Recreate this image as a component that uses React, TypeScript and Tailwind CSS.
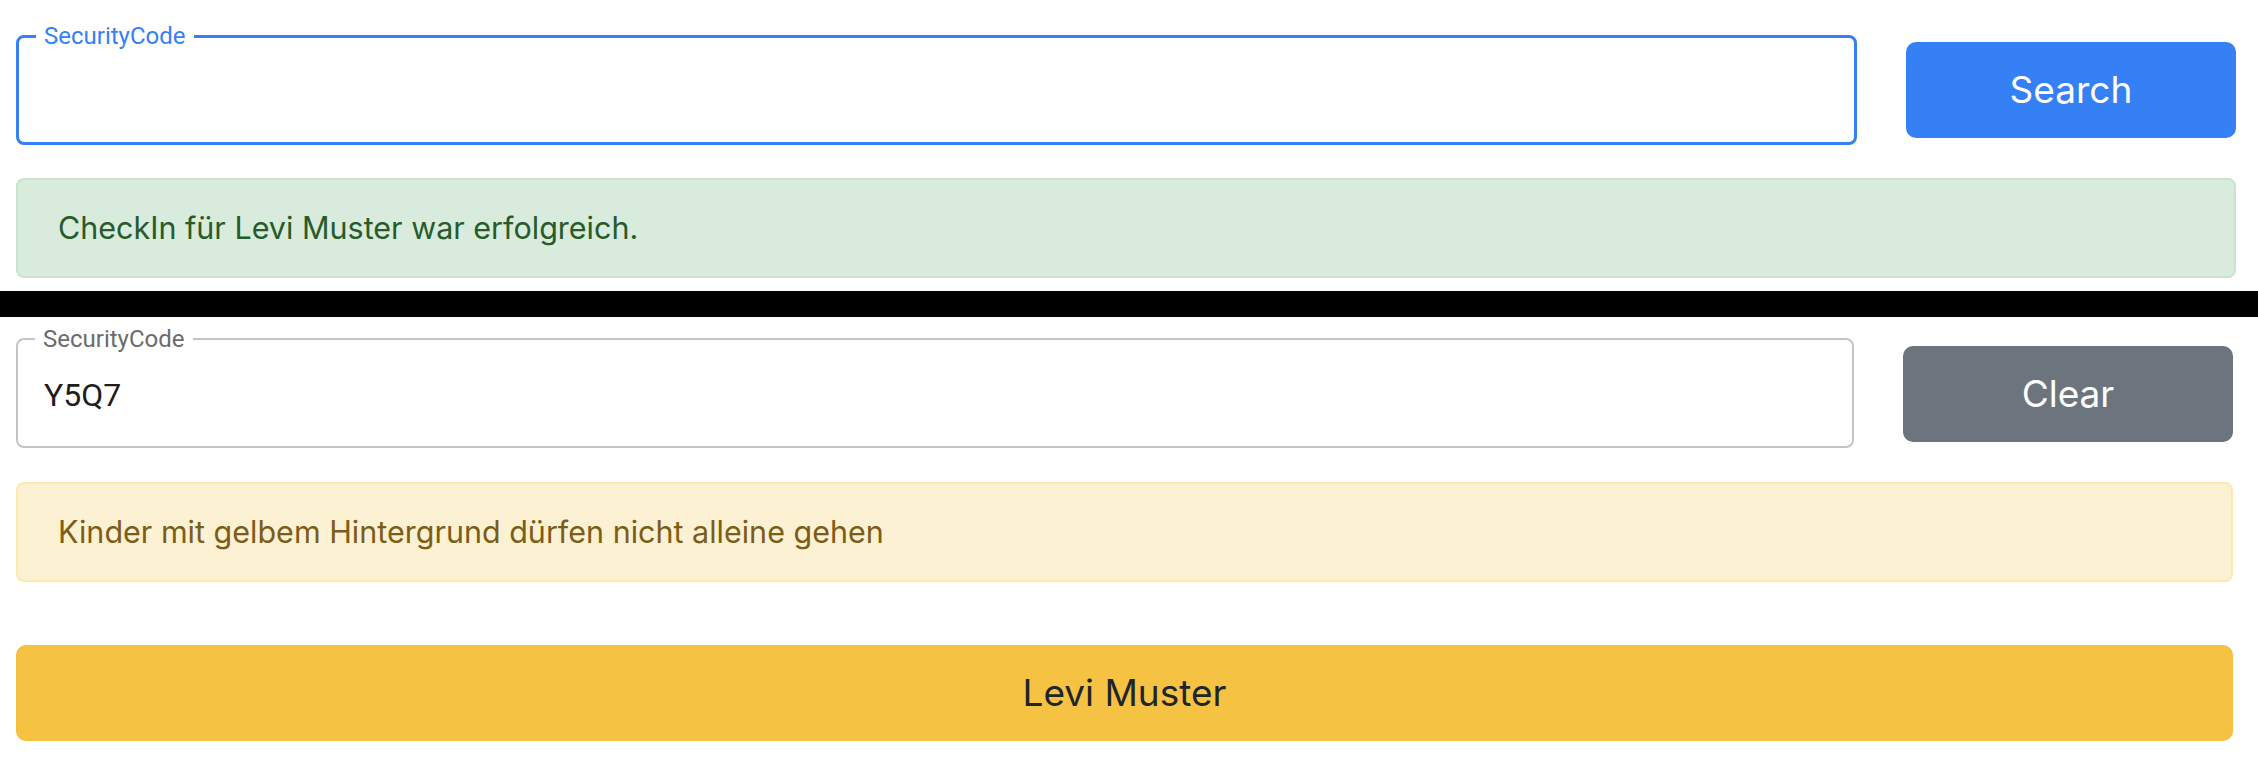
import { useState } from "react";

const sf = "font-['Inter','Liberation_Sans',sans-serif]";
const roboto = "font-['Roboto','Liberation_Sans',sans-serif]";

function CodeField({
  value,
  focused,
}: {
  value: string;
  focused?: boolean;
}) {
  return (
    <fieldset
      className={
        "h-[121px] flex-1 rounded-[8px] " +
        (focused ? "border-[3px] border-[#3580f4]" : "border-2 border-[#c4c4c4]")
      }
    >
      <legend
        className={
          roboto +
          " ml-[17px] px-[8px] text-[24px] leading-[24px] " +
          (focused ? "text-[#3580f4]" : "text-[#6b6b6b]")
        }
      >
        SecurityCode
      </legend>
      <div
        className={
          roboto +
          " flex h-[92px] items-center pb-[4px] pl-[26px] text-[32px] text-[#1d1d1d]"
        }
      >
        {value}
      </div>
    </fieldset>
  );
}

export default function App() {
  const [code] = useState("Y5Q7");

  return (
    <main className="min-h-screen bg-white">
      {/* first state: search */}
      <section className="pl-[16px] pr-[22px] pt-[24px] pb-[13px]">
        <div className="flex items-start">
          <CodeField value="" focused />
          <button
            type="button"
            className={
              sf +
              " ml-[49px] mt-[18px] h-[96px] w-[330px] rounded-[10px] bg-[#3580f4] text-[37px] text-white"
            }
          >
            Search
          </button>
        </div>
        <div
          className={
            sf +
            " mt-[33px] rounded-[8px] border-2 border-[#c8e4cc] bg-[#d9ebdc] px-[40px] py-[24px] text-[30.5px] leading-[48px] text-[#275b2a]"
          }
        >
          CheckIn für Levi Muster war erfolgreich.
        </div>
      </section>

      <div className="h-[26px] bg-black" />

      {/* second state: result */}
      <section className="pl-[16px] pr-[25px] pt-[10px]">
        <div className="flex items-start">
          <CodeField value={code} />
          <button
            type="button"
            className={
              sf +
              " ml-[49px] mt-[19px] h-[96px] w-[330px] rounded-[10px] bg-[#6c757d] text-[37px] text-white"
            }
          >
            Clear
          </button>
        </div>
        <div
          className={
            sf +
            " mt-[34px] rounded-[8px] border-2 border-[#fbe9b0] bg-[#fdf1d3] px-[40px] py-[24px] text-[30.5px] leading-[48px] text-[#7c5d17]"
          }
        >
          Kinder mit gelbem Hintergrund dürfen nicht alleine gehen
        </div>
        <button
          type="button"
          className={
            sf +
            " mt-[63px] h-[96px] w-full rounded-[10px] border-2 border-[#f6bf3c] bg-[#f6c244] text-[37px] text-[#212529]"
          }
        >
          Levi Muster
        </button>
      </section>
    </main>
  );
}
